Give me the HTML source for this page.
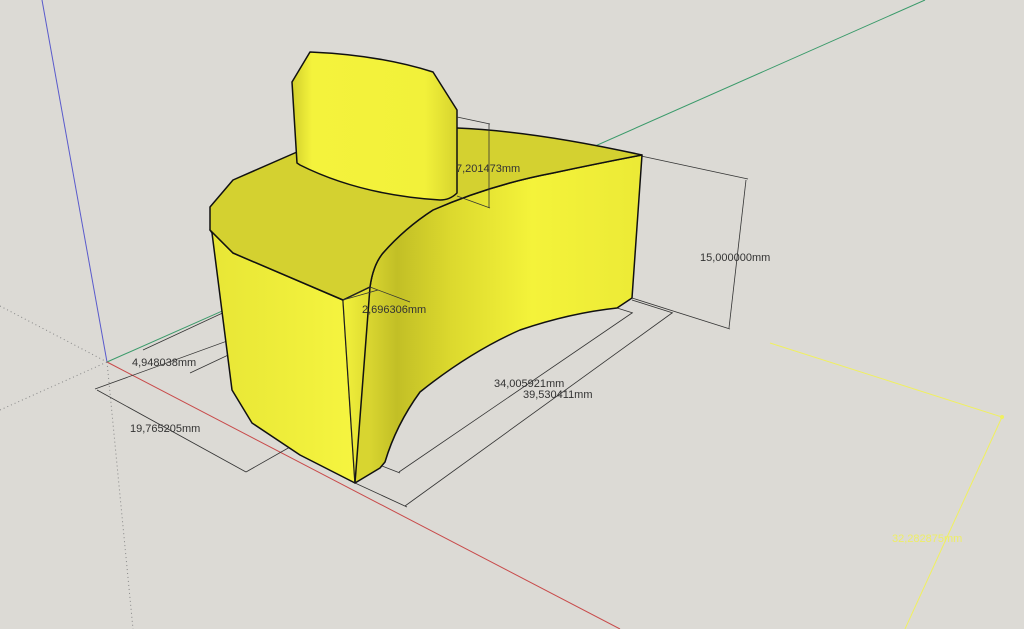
<!DOCTYPE html>
<html><head><meta charset="utf-8"><style>
html,body{margin:0;padding:0;background:#dcdad5;}
svg{display:block}
text{font-family:"Liberation Sans",sans-serif;font-size:11px;fill:#333}
</style></head><body>
<svg width="1024" height="629" viewBox="0 0 1024 629" xmlns="http://www.w3.org/2000/svg">
<defs>
<linearGradient id="front" x1="370" y1="0" x2="640" y2="0" gradientUnits="userSpaceOnUse">
<stop offset="0" stop-color="#d8d530"/><stop offset="0.1" stop-color="#c2bf26"/><stop offset="0.3" stop-color="#dcd92e"/><stop offset="0.6" stop-color="#f4f33a"/><stop offset="1" stop-color="#ecea36"/></linearGradient>
<linearGradient id="left" x1="210" y1="0" x2="355" y2="0" gradientUnits="userSpaceOnUse">
<stop offset="0" stop-color="#e8e636"/><stop offset="0.5" stop-color="#eeed3a"/><stop offset="1" stop-color="#f6f540"/></linearGradient>
<linearGradient id="knob" x1="292" y1="0" x2="458" y2="0" gradientUnits="userSpaceOnUse">
<stop offset="0" stop-color="#d2cf2c"/><stop offset="0.12" stop-color="#f4f33c"/><stop offset="0.8" stop-color="#f2f13a"/><stop offset="1" stop-color="#d6d32e"/></linearGradient>
<linearGradient id="corner" x1="343" y1="0" x2="372" y2="0" gradientUnits="userSpaceOnUse">
<stop offset="0" stop-color="#f2f13c"/><stop offset="1" stop-color="#dcd930"/></linearGradient>
</defs>
<!-- axes -->
<line x1="42" y1="0" x2="107" y2="362" stroke="#5a5acc" stroke-width="1"/>
<line x1="107" y1="362" x2="925" y2="0" stroke="#3a9a6a" stroke-width="1"/>
<line x1="107" y1="362" x2="620" y2="629" stroke="#c84a4a" stroke-width="1"/>
<line x1="0" y1="306" x2="107" y2="362" stroke="#888" stroke-dasharray="1,3"/>
<line x1="0" y1="410" x2="107" y2="362" stroke="#888" stroke-dasharray="1,3"/>
<line x1="107" y1="362" x2="133" y2="629" stroke="#888" stroke-dasharray="1,3"/>
<!-- yellow guide -->
<polyline points="770,343 1002,417 905,629" fill="none" stroke="#f0f060" stroke-width="1"/>
<circle cx="1002" cy="417" r="2" fill="#f0f060"/>
<text x="892" y="542" style="fill:#eeee66">32,282875mm</text>
<!-- dimension lines (behind) -->
<g stroke="#333" stroke-width="0.8" fill="none">
<line x1="95" y1="389" x2="340" y2="300"/>
<line x1="143" y1="350" x2="287" y2="283"/>
<line x1="190" y1="373" x2="345" y2="300"/>
<line x1="97" y1="390" x2="246" y2="472"/>
<line x1="246" y1="472" x2="290" y2="447"/>
<line x1="641" y1="156" x2="748" y2="179"/>
<line x1="632" y1="298" x2="730" y2="329"/>
<line x1="746" y1="180" x2="729" y2="328"/>
<line x1="399" y1="472" x2="632" y2="313"/>
<line x1="405" y1="506" x2="672" y2="313"/>
<line x1="382" y1="466" x2="400" y2="473"/>
<line x1="355" y1="483" x2="407" y2="507"/>
<line x1="617" y1="308" x2="633" y2="313"/>
<line x1="632" y1="300" x2="673" y2="313"/>
</g>
<!-- left face -->
<polygon points="210,230 233,253 343,300 355,483 300,455 252,423 232,390 212,233" fill="url(#left)" stroke="#111" stroke-width="1.5" stroke-linejoin="round"/>
<!-- corner face -->
<polygon points="343,300 370,287 380,468 355,483" fill="url(#corner)"/>
<!-- front concave face -->
<path d="M370,287 Q373,265 383,253 Q405,228 433,210 Q490,185 553,173 Q600,163 642,155 L632,298 L617,308 Q570,313 520,330 Q470,352 420,392 Q396,425 385,462 L380,468 L355,483 Z" fill="url(#front)" stroke="#111" stroke-width="1.5" stroke-linejoin="round"/>
<line x1="343" y1="300" x2="355" y2="483" stroke="#222" stroke-width="1"/>
<!-- top face -->
<path d="M210,207 L233,180 L297,152 Q380,126 457,128 Q533,131 642,155 Q600,163 553,173 Q490,185 433,210 Q405,228 383,253 Q373,265 370,287 L343,300 L233,253 L210,230 Z" fill="#d4d130" stroke="#111" stroke-width="1.5" stroke-linejoin="round"/>
<line x1="343" y1="300" x2="370" y2="287" stroke="#222" stroke-width="1"/>
<!-- knob -->
<path d="M310,52 Q380,55 433,72 L457,110 L457,193 Q450,200 440,200 Q360,195 300,165 L297,163 L292,82 Z" fill="url(#knob)" stroke="#111" stroke-width="1.5" stroke-linejoin="round"/>
<g stroke="#333" stroke-width="0.8" fill="none">
<line x1="457" y1="117" x2="490" y2="124"/>
<line x1="457" y1="196" x2="490" y2="208"/>
<line x1="489" y1="124" x2="489" y2="208"/>
<line x1="343" y1="300" x2="378" y2="290"/>
<line x1="370" y1="287" x2="410" y2="302"/>
</g>
<text x="456" y="172">7,201473mm</text>
<text x="700" y="261">15,000000mm</text>
<text x="362" y="313">2,696306mm</text>
<text x="132" y="366">4,948038mm</text>
<text x="494" y="387">34,005921mm</text>
<text x="523" y="398">39,530411mm</text>
<text x="130" y="432">19,765205mm</text>
</svg>
</body></html>
